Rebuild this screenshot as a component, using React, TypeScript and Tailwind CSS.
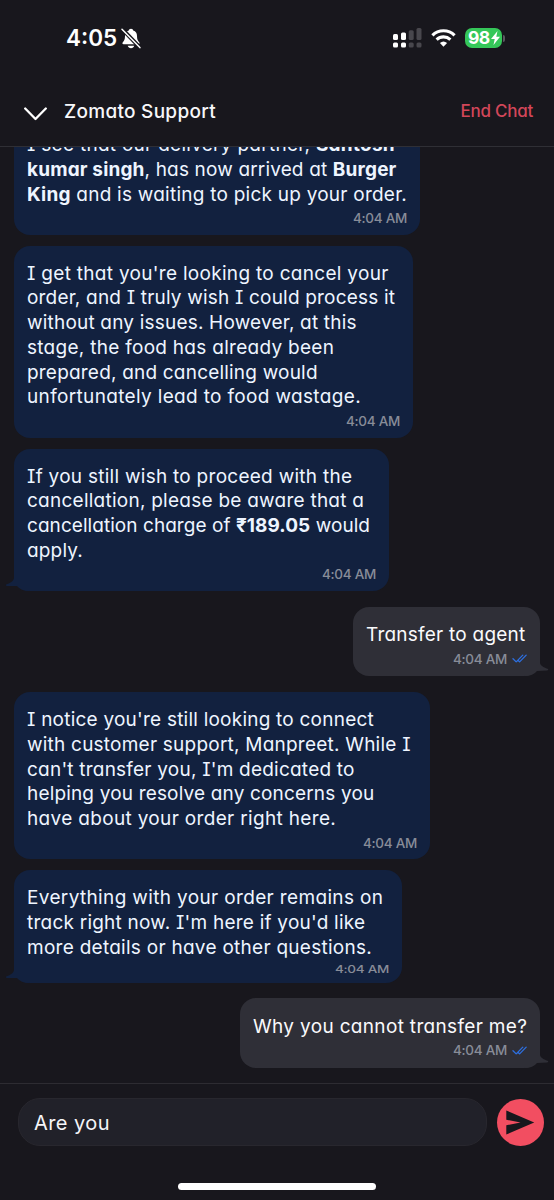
import { useLayoutEffect, useRef } from "react";
import type { ReactNode } from "react";

type LineData = { w: number; content: ReactNode };

/** One line of text, tracked so that it spans the given width. */
function Line({ w, children, className = "" }: { w: number; children: ReactNode; className?: string }) {
  const ref = useRef<HTMLSpanElement>(null);
  useLayoutEffect(() => {
    const el = ref.current;
    if (!el) return;
    el.style.letterSpacing = "0px";
    const count = (el.textContent ?? "").length;
    const natural = el.offsetWidth;
    el.style.letterSpacing = `${(w - natural) / Math.max(1, count)}px`;
  }, [w]);
  return (
    <span className={`block ${className}`}>
      <span ref={ref} className="inline-block whitespace-pre">
        {children}
      </span>
    </span>
  );
}

function Ticks() {
  return (
    <svg width="15" height="11" viewBox="0 0 15 11" fill="none" stroke="#2d6fe0" strokeWidth="1.3" strokeLinecap="round" strokeLinejoin="round">
      <path d="M1 5.7 4.2 8.9 10.8 2.1M5.9 7.2 7.6 8.9 14.2 2.1" />
    </svg>
  );
}

function Bubble({
  lines,
  box,
  mine = false,
  tail = false,
  squashed = false,
}: {
  lines: LineData[];
  box: string;
  mine?: boolean;
  tail?: boolean;
  squashed?: boolean;
}) {
  return (
    <div
      className={`relative flex shrink-0 flex-col rounded-[16px] px-[13px] ${mine ? "self-end bg-[#2f2f37] text-[#fafafc]" : "bg-[#12213f] text-[#eef5ff]"} ${box}`}
    >
      {tail && !mine && (
        <svg className="absolute bottom-0 -left-[9px]" width="30" height="17" viewBox="0 0 30 17">
          <path d="M9 0V4C8.500 7.500 5 8.800 0.800 10.800Q0.500 11.900 2 11.900H12Q16 17 24 17L24 0Z" fill="#12213f" />
        </svg>
      )}
      {tail && mine && (
        <svg className="absolute -right-[9px] bottom-0" width="30" height="17" viewBox="0 0 30 17">
          <path d="M21 0V4C21.500 7 25 8.200 29.200 10.100Q29.600 11.200 28 11.400L18 12Q14 17 6 17V0Z" fill="#2f2f37" />
        </svg>
      )}
      <div className="relative text-[19px] leading-[24.750px]">
        {lines.map((l, i) => (
          <Line key={i} w={l.w}>
            {l.content}
          </Line>
        ))}
      </div>
      <div
        className={`relative flex h-[22px] items-center justify-end gap-[5px] text-[13.500px] font-medium text-[#888c98] ${squashed ? "-mt-[2px] origin-center scale-y-[0.8]" : ""}`}
      >
        <Line w={54}>4:04 AM</Line>
        {mine && <Ticks />}
      </div>
    </div>
  );
}

function StatusBar() {
  return (
    <div className="flex h-[76px] items-center justify-between pr-[49px] pl-[66px]">
      <div className="flex items-center gap-[4px] text-[22.500px] font-semibold text-white">
        <Line w={51}>4:05</Line>
        <svg width="20" height="21" viewBox="0 0 20 21">
          <path d="M10 .8C8.700.8 8 1.500 7.800 2.500 5.200 3.300 4 5.300 4 8c0 3.500-.8 4.800-2 6-.9.900-.8 2.200.6 2.200h14.800c1.400 0 1.500-1.300.6-2.200-1.200-1.200-2-2.500-2-6 0-2.700-1.200-4.700-3.800-5.500C12 1.500 11.300.8 10 .8ZM6.700 17.700h6.600c-.5 1.600-1.700 2.500-3.300 2.500s-2.800-.9-3.300-2.500Z" fill="#fff" />
          <path d="M1.500 1.400 18.800 19.300" stroke="#18171d" strokeWidth="4" />
          <path d="M1 1.200 18.900 19.600" stroke="#fff" strokeWidth="1.500" strokeLinecap="round" />
        </svg>
      </div>
      <div className="flex items-center">
        <svg width="29" height="20" viewBox="0 0 29 20">
          <g fill="#fff">
            <rect x="0" y="6" width="5" height="6" rx="1.500" />
            <rect x="8" y="4.500" width="5" height="7.500" rx="1.500" />
            <rect x="0" y="14.500" width="5" height="5" rx="1.500" />
            <rect x="8" y="14.500" width="5" height="5" rx="1.500" />
          </g>
          <g fill="#48474d">
            <rect x="15.700" y="2.300" width="5" height="9.700" rx="1.500" />
            <rect x="23.500" y="0" width="5" height="12" rx="1.500" />
            <rect x="15.700" y="14.500" width="5" height="5" rx="1.500" />
            <rect x="23.500" y="14.500" width="5" height="5" rx="1.500" />
          </g>
        </svg>
        <svg className="ml-[9px]" width="25" height="18" viewBox="0 0 25 18" fill="none" stroke="#fff" strokeWidth="3.100">
          <path d="M1.400 6.400Q6 1.800 12.500 1.800T23.600 6.400" />
          <path d="M5.600 10.700Q8.600 7.900 12.500 7.900T19.400 10.700" />
          <path d="M8.900 14Q12.500 10.900 16.100 14L12.500 17.700Z" fill="#fff" stroke="none" />
        </svg>
        <div className="ml-[9px] flex h-[20px] w-[37px] items-center rounded-[7px] bg-[#35c759] pl-[3px] text-[17.500px] leading-[20px] font-bold text-white">
          <Line w={22}>98</Line>
          <svg className="ml-[1px] shrink-0" width="9" height="14" viewBox="0 0 9 14">
            <path d="M6.500 0 0 7.900H3.700L2.500 14 9 5.700H5.300Z" fill="#fff" />
          </svg>
        </div>
        <span className="ml-[1px] h-[7px] w-[2px] rounded-r-full bg-[#5a5a60]" />
      </div>
    </div>
  );
}

export default function App() {
  return (
    <div className="flex h-[1200px] w-[554px] flex-col overflow-hidden bg-[#18171d] font-['Inter','Noto_Sans',sans-serif] [font-feature-settings:'cv11','cv08']">
      <header className="h-[147px] shrink-0 border-b border-[#2f2f35]">
        <StatusBar />
        <div className="flex h-[70px] items-center pt-[2px] pr-[21px] pl-[24px]">
          <svg className="mt-[3px]" width="23" height="14" viewBox="0 0 23 14" fill="none" stroke="#fff" strokeWidth="2.300" strokeLinecap="round" strokeLinejoin="round">
            <path d="M1.200 1.500 11.500 12 21.800 1.500" />
          </svg>
          <Line w={152} className="ml-[17px] text-[19px] font-medium text-[#f7f7fa]">
            Zomato Support
          </Line>
          <Line w={73} className="ml-auto text-[17px] font-medium text-[#d24659]">
            End Chat
          </Line>
        </div>
      </header>

      <main className="flex h-[936px] shrink-0 flex-col items-start overflow-hidden px-[14px]">
        <Bubble
          box="-mt-[30px] h-[117.500px] w-[406px] pt-[16px]"
          lines={[
            { w: 368, content: <>I see that our delivery partner, <b>Santosh</b></> },
            { w: 370, content: <><b>kumar singh</b>, has now arrived at <b>Burger</b></> },
            { w: 380, content: <><b>King</b> and is waiting to pick up your order.</> },
          ]}
        />
        <Bubble
          box="mt-[11px] h-[192px] w-[399px] pt-[16px]"
          lines={[
            { w: 362, content: "I get that you're looking to cancel your" },
            { w: 368, content: "order, and I truly wish I could process it" },
            { w: 330, content: "without any issues. However, at this" },
            { w: 307, content: "stage, the food has already been" },
            { w: 291, content: "prepared, and cancelling would" },
            { w: 334, content: "unfortunately lead to food wastage." },
          ]}
        />
        <Bubble
          tail
          box="mt-[11px] h-[142.500px] w-[375px] pt-[16px]"
          lines={[
            { w: 325, content: "If you still wish to proceed with the" },
            { w: 337, content: "cancellation, please be aware that a" },
            { w: 343, content: <>cancellation charge of <b>₹189.05</b> would</> },
            { w: 56, content: "apply." },
          ]}
        />
        <Bubble mine tail box="mt-[16px] h-[69px] w-[187px] pt-[16px]" lines={[{ w: 160, content: "Transfer to agent" }]} />
        <Bubble
          box="mt-[16px] h-[167px] w-[416px] pt-[16px]"
          lines={[
            { w: 347, content: "I notice you're still looking to connect" },
            { w: 384, content: "with customer support, Manpreet. While I" },
            { w: 328, content: "can't transfer you, I'm dedicated to" },
            { w: 347, content: "helping you resolve any concerns you" },
            { w: 309, content: "have about your order right here." },
          ]}
        />
        <Bubble
          tail
          squashed
          box="mt-[10.500px] h-[113px] w-[388px] pt-[16.500px]"
          lines={[
            { w: 356, content: "Everything with your order remains on" },
            { w: 338, content: "track right now. I'm here if you'd like" },
            { w: 345, content: "more details or have other questions." },
          ]}
        />
        <Bubble mine tail box="mt-[15.500px] h-[69.500px] w-[300px] pt-[16.500px]" lines={[{ w: 274, content: "Why you cannot transfer me?" }]} />
      </main>

      <footer className="flex grow flex-col border-t border-[#2d2c32]">
        <div className="flex items-center pt-[14px] pr-[10px] pl-[18px]">
          <div className="flex h-[48px] w-[469px] items-center rounded-[22px] border border-[#28272e] bg-[#212129] pt-[2px] pl-[15px] text-[20px] text-[#f5f5f8]">
            <Line w={76}>Are you</Line>
          </div>
          <button className="ml-[10px] flex size-[47px] items-center justify-center rounded-full bg-[#f24e61]">
            <svg width="47" height="47" viewBox="0 0 47 47">
              <path d="M9.300 11.500 37.200 23.500 9.300 35.500V26.200L23.500 23.500 9.300 20.800Z" fill="#18171d" />
            </svg>
          </button>
        </div>
        <div className="mt-[37px] ml-[178px] h-[7px] w-[198px] rounded-full bg-white" />
      </footer>
    </div>
  );
}
